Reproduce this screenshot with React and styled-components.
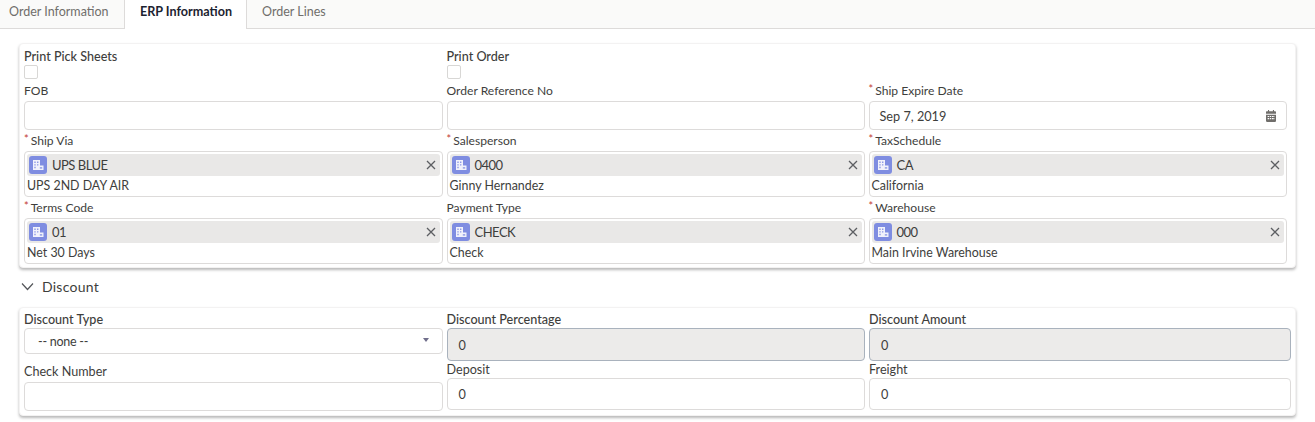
import React from "react";
import styled, { createGlobalStyle } from "styled-components";

const Global = createGlobalStyle`
  html, body { margin: 0; padding: 0; background: #fff; }
  body { font-family: Lato, "Open Sans", "Liberation Sans", sans-serif; color: #3e3e3c; }
`;
const Page = styled.div`
  width: 1315px; height: 422px; overflow: hidden; background: #fff;
  display: flex; flex-direction: column;
`;
const TabBar = styled.div`
  height: 28px; flex: none; display: flex; background: #fafaf9; border-bottom: 1px solid #dddbda;
`;
const Tab = styled.div`
  box-sizing: border-box;
  height: ${p => (p.$active ? "29px" : "28px")};
  width: ${p => p.$w}px;
  padding-left: ${p => p.$pl}px;
  font-size: ${p => (p.$active ? "12.6px" : "12.5px")}; line-height: 23px;
  color: ${p => (p.$active ? "#1c2330" : "#706e6b")};
  font-weight: ${p => (p.$active ? 700 : 400)};
  background: ${p => (p.$active ? "#fff" : "transparent")};
  border-left: ${p => (p.$active ? "1px solid #dddbda" : "0")};
  border-right: ${p => (p.$active ? "1px solid #dddbda" : "0")};
`;
const Card = styled.section`
  box-sizing: border-box; flex: none;
  margin: ${p => p.$top}px 19px 0 19px;
  width: 1277px;
  height: ${p => p.$h}px;
  background: #fff;
  border-radius: 4px;
  border: 1px solid #f3f2f2;
  box-shadow: 0 2px 3px rgba(0,0,0,.28);
  padding: ${p => p.$pt}px 0 0 4px;
  display: grid;
  grid-template-columns: ${p => p.$cols};
  grid-template-rows: ${p => p.$rows};
  column-gap: 4px;
`;
const Field = styled.div`
  display: flex; flex-direction: column; min-width: 0;
`;
const Label = styled.label`
  font-size: ${p => (p.$small ? 12.1 : 12.6)}px; line-height: 14px; height: ${p => p.$h || 14}px; color: #3e3e3c;
  margin-top: ${p => p.$mt || 0}px;
  display: block; white-space: nowrap;
  font-weight: ${p => (p.$strong ? 500 : 400)};
`;
const Req = styled.span`
  color: #c23934; font-size: 11px; margin-right: 2px; position: relative; top: -2px;
`;
const Check = styled.span`
  display: block; box-sizing: border-box; width: 14px; height: 14px; margin-top: 1px;
  border: 1px solid #d8d7d5; border-radius: 2px; background: #fff;
`;
const Input = styled.div`
  box-sizing: border-box; height: ${p => p.$h}px;
  border: 1px solid ${p => (p.$disabled ? "#a9b2bd" : "#dddbda")};
  border-radius: 4px;
  background: ${p => (p.$disabled ? "#ecebea" : "#fff")};
  display: flex; align-items: center; justify-content: space-between;
  padding: 0 ${p => p.$pr || 12}px 0 ${p => p.$pl || 11}px;
  font-size: 12.7px; color: #3e3e3c;
`;
const SelectValue = styled.span`
  font-size: 12.5px; letter-spacing: -.25px;
`;
const Caret = styled.span`
  width: 0; height: 0; border-left: 3.5px solid transparent; border-right: 3.5px solid transparent;
  border-top: 4.5px solid #706e8b; margin-top: -3px; margin-right: 1px;
`;
const Lookup = styled.div`
  box-sizing: border-box; height: 46px; border: 1px solid #dddbda; border-radius: 4px;
  padding: 2px 2px 0 2px; background: #fff; display: flex; flex-direction: column;
`;
const Pill = styled.div`
  height: 22px; flex: none; border-radius: 3px; background: #e9e8e7; display: flex; align-items: center;
  padding: 0 4px 0 2px; font-size: 13px; letter-spacing: -.5px; color: #3e3e3c;
`;
const PillText = styled.span`
  flex: 1; margin-left: 5px;
`;
const Badge = styled.span`
  width: 18px; height: 18px; border-radius: 3px; background: #7f8de1; display: flex;
  align-items: center; justify-content: center;
`;
const Sub = styled.div`
  font-size: 12.4px; line-height: 15px; margin-top: 2px; color: #3e3e3c;
`;
const SectionHead = styled.div`
  flex: none; display: flex; align-items: center; margin: 9px 0 0 21px; height: 18px;
  font-size: 14px; letter-spacing: .25px; color: #3e3e3c;
`;
const Chevron = styled.svg`
  width: 13px; height: 13px; margin-right: 8px;
`;

const TableIcon = () => (
  <svg width="12" height="12" viewBox="0 0 12 12">
    <path fill="#f1f2fb" d="M1 1h7v10H1z" />
    <path fill="#8d99e5" d="M2.3 2.6h1.4V4H2.3zM5 2.6h1.4V4H5zM2.3 5.2h1.4v1.4H2.3zM5 5.2h1.4v1.4H5zM2.3 7.8h1.4v1.4H2.3z" />
    <path fill="#f1f2fb" d="M6.5 6.5h5V11h-5z" />
    <path fill="#8d99e5" d="M7.8 8.2h2.4v1.4H7.8z" />
  </svg>
);
const CloseIcon = () => (
  <svg width="10" height="10" viewBox="0 0 10 10">
    <path d="M1 1l8 8M9 1L1 9" stroke="#5c5e62" strokeWidth="1.3" fill="none" />
  </svg>
);
const CalendarIcon = () => (
  <svg width="10" height="12" viewBox="0 0 11 13">
    <path fill="#706e6b" d="M2.2 0h1.2v1.4h4.2V0h1.2v1.4H10c.5 0 1 .4 1 1V4H0V2.4c0-.6.5-1 1-1h1.2zM0 5h11v7c0 .6-.5 1-1 1H1c-.5 0-1-.4-1-1z" />
    <path fill="#fff" d="M1.8 6.4h1.5v1.3H1.8zM4.1 6.4h1.5v1.3H4.1zM6.4 6.4h1.5v1.3H6.4zM8.2 6.4h1v1.3h-1zM1.8 8.8h1.5v1.3H1.8zM4.1 8.8h1.5v1.3H4.1zM6.4 8.8h1.5v1.3H6.4zM8.2 8.8h1v1.3h-1z" />
  </svg>
);

const LookupField = ({ label, req, pill, sub }) => (
  <Field>
    <Label $small $h={17}>{req && <Req>*</Req>}{label}</Label>
    <Lookup>
      <Pill>
        <Badge><TableIcon /></Badge>
        <PillText>{pill}</PillText>
        <CloseIcon />
      </Pill>
      <Sub>{sub}</Sub>
    </Lookup>
  </Field>
);

export default function App() {
  return (
    <Page>
      <Global />
      <TabBar>
        <Tab $w={124} $pl={9}>Order Information</Tab>
        <Tab $active $w={123} $pl={15}>ERP Information</Tab>
        <Tab $w={100} $pl={15}>Order Lines</Tab>
      </TabBar>
      <Card $top={14} $h={225} $pt={6} $cols="418.5px 418px 418px" $rows="34px 50px 67px 67px">
        <Field>
          <Label $strong>Print Pick Sheets</Label>
          <Check />
        </Field>
        <Field>
          <Label $strong>Print Order</Label>
          <Check />
        </Field>
        <div />
        <Field>
          <Label $small $h={17}>FOB</Label>
          <Input $h={29} />
        </Field>
        <Field>
          <Label $small $h={17}>Order Reference No</Label>
          <Input $h={29} />
        </Field>
        <Field>
          <Label $small $h={17}><Req>*</Req>Ship Expire Date</Label>
          <Input $h={29} $pr={10} $pl={10}>
            <span>Sep 7, 2019</span>
            <CalendarIcon />
          </Input>
        </Field>
        <LookupField req label="Ship Via" pill="UPS BLUE" sub="UPS 2ND DAY AIR" />
        <LookupField req label="Salesperson" pill="0400" sub="Ginny Hernandez" />
        <LookupField req label="TaxSchedule" pill="CA" sub="California" />
        <LookupField req label="Terms Code" pill="01" sub="Net 30 Days" />
        <LookupField label="Payment Type" pill="CHECK" sub="Check" />
        <LookupField req label="Warehouse" pill="000" sub="Main Irvine Warehouse" />
      </Card>
      <SectionHead>
        <Chevron viewBox="0 0 13 13">
          <path d="M1 3.5l5.5 6 5.5-6" stroke="#54565a" strokeWidth="1.2" fill="none" />
        </Chevron>
        Discount
      </SectionHead>
      <Card $top={12} $h={109} $pt={5} $cols="418.5px 418.5px 422px" $rows="50px 50px">
        <Field>
          <Label $strong $h={15}>Discount Type</Label>
          <Input $h={26} $pl={13}>
            <SelectValue>-- none --</SelectValue>
            <Caret />
          </Input>
        </Field>
        <Field>
          <Label $strong $h={15}>Discount Percentage</Label>
          <Input $h={33} $disabled><span>0</span></Input>
        </Field>
        <Field>
          <Label $strong $h={15}>Discount Amount</Label>
          <Input $h={33} $disabled><span>0</span></Input>
        </Field>
        <Field>
          <Label $mt={2} $h={17}>Check Number</Label>
          <Input $h={29} />
        </Field>
        <Field>
          <Label $h={15}>Deposit</Label>
          <Input $h={32}><span>0</span></Input>
        </Field>
        <Field>
          <Label $h={15}>Freight</Label>
          <Input $h={32}><span>0</span></Input>
        </Field>
      </Card>
    </Page>
  );
}
